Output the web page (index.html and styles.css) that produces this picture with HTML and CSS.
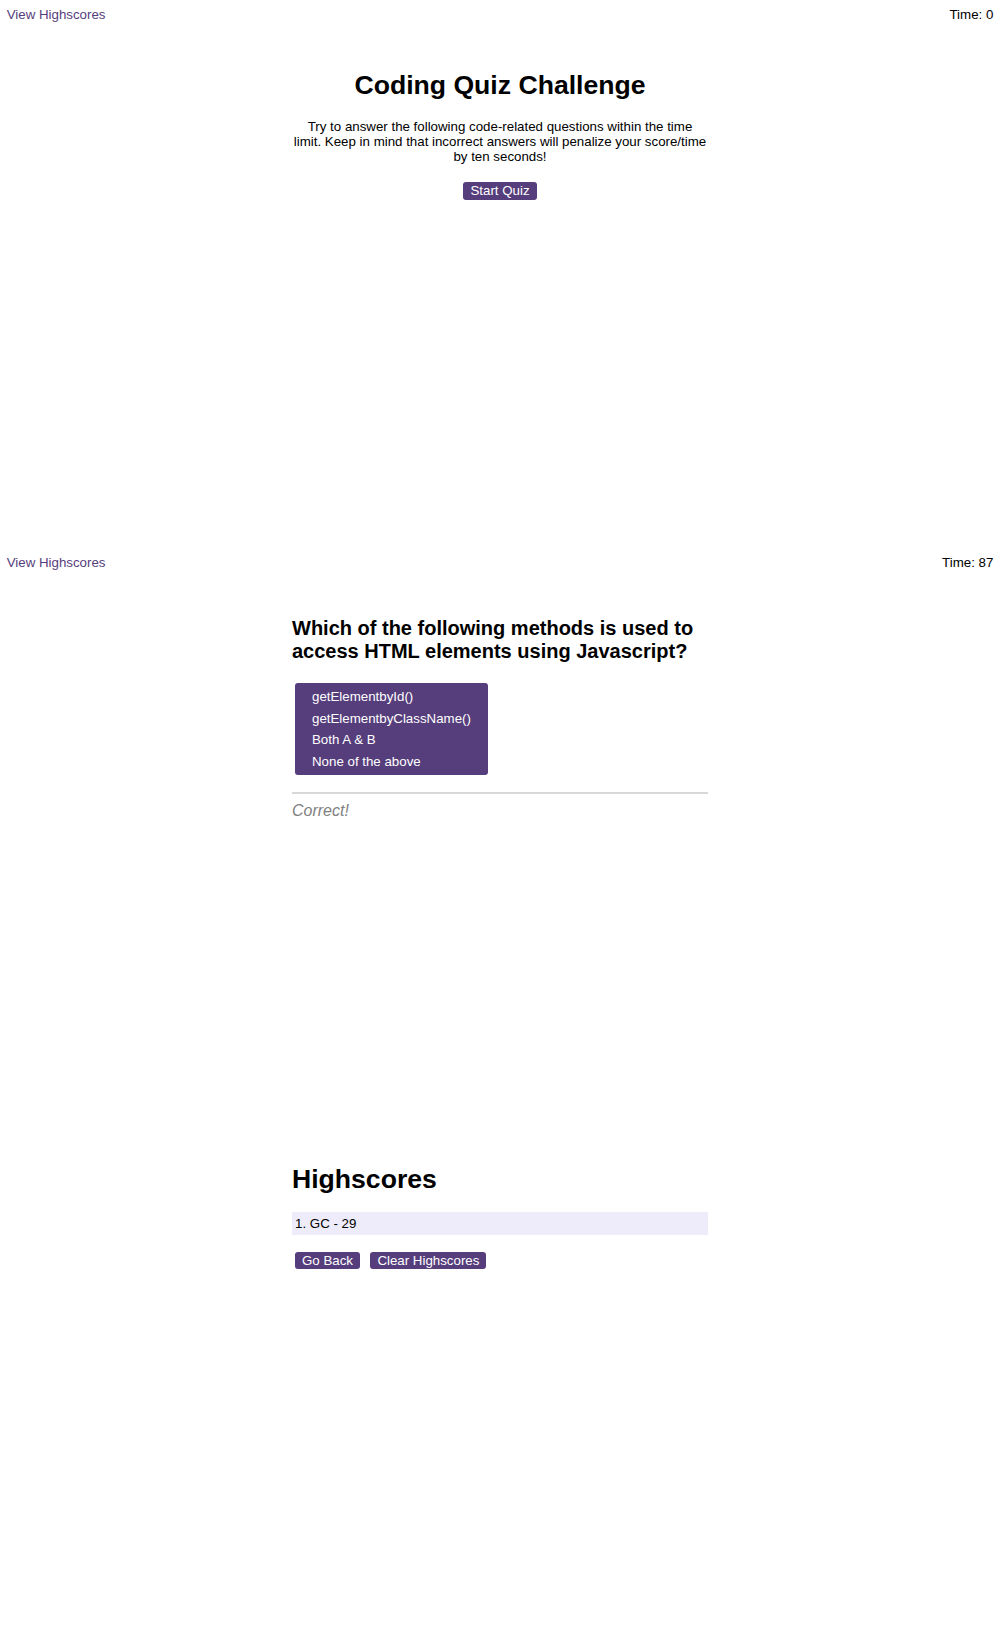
FILE: index.html
```html
<!DOCTYPE html>
<html lang="en">
<head>
<meta charset="utf-8">
<title>Coding Quiz Challenge</title>
<link rel="stylesheet" href="styles.css">
</head>
<body>
  <section class="screen">
    <header class="topbar">
      <a class="hs-link" href="#">View Highscores</a>
      <span class="timer">Time: 0</span>
    </header>
    <main class="panel panel-center">
      <h1 class="title">Coding Quiz Challenge</h1>
      <p class="intro">Try to answer the following code-related questions within the time limit. Keep in mind that incorrect answers will penalize your score/time by ten seconds!</p>
      <button class="btn" type="button">Start Quiz</button>
    </main>
  </section>

  <section class="screen">
    <header class="topbar">
      <a class="hs-link" href="#">View Highscores</a>
      <span class="timer">Time: 87</span>
    </header>
    <main class="panel">
      <h2 class="question">Which of the following methods is used to access HTML elements using Javascript?</h2>
      <ul class="choices">
        <li>getElementbyId()</li>
        <li>getElementbyClassName()</li>
        <li>Both A &amp; B</li>
        <li>None of the above</li>
      </ul>
      <hr class="divider">
      <p class="feedback">Correct!</p>
    </main>
  </section>

  <section class="screen screen-scores">
    <main class="panel">
      <h1 class="scores-title">Highscores</h1>
      <ol class="scores">
        <li>1. GC - 29</li>
      </ol>
      <div class="actions">
        <button class="btn" type="button">Go Back</button>
        <button class="btn" type="button">Clear Highscores</button>
      </div>
    </main>
  </section>
</body>
</html>
```

FILE: styles.css
```css
* {
  box-sizing: border-box;
}

html, body {
  background: #ffffff;
}

body {
  margin: 0;
  padding: 6.7px 6.7px 0;
  font-family: "Liberation Sans", Arial, Helvetica, sans-serif;
  font-size: 13.3px;
  line-height: 15.3px;
  color: #000000;
}

.screen {
  height: 547.9px;
}

.topbar {
  display: flex;
  justify-content: space-between;
  align-items: flex-start;
  height: 15.3px;
}

.hs-link {
  color: #563d7c;
  text-decoration: none;
}

.timer {
  color: #000000;
}

.panel {
  width: 416px;
  margin: 0 auto;
}

.panel-center {
  text-align: center;
}

.title {
  margin: 47.9px 0 18.4px;
  font-size: 26.6px;
  line-height: 30.6px;
  font-weight: bold;
}

.intro {
  margin: 0 0 17.5px;
  padding: 0 1px;
}

.btn {
  display: inline-block;
  margin: 0;
  padding: 1px 7px 1px;
  border: 0;
  border-radius: 3px;
  background: #563d7c;
  color: #ffffff;
  font-family: "Liberation Sans", Arial, Helvetica, sans-serif;
  font-size: 13.3px;
  line-height: 15.3px;
  cursor: pointer;
}

.question {
  margin: 46.8px 0 20px;
  font-size: 20px;
  line-height: 23px;
  font-weight: bold;
}

.choices {
  width: fit-content;
  margin: 0 0 0 3px;
  padding: 3.4px 17.5px 3.4px 17px;
  list-style: none;
  background: #563d7c;
  border-radius: 3px;
  color: #ffffff;
}

.choices li {
  padding: 3.1px 0;
}

.divider {
  height: 2px;
  margin: 16.7px 0 7.6px;
  border: 0;
  background: #d8d8d8;
}

.feedback {
  margin: 0;
  font-size: 16px;
  line-height: 18.4px;
  font-style: italic;
  color: #808080;
}

.screen-scores .panel {
  padding-top: 62px;
}

.scores-title {
  margin: 0 0 17px;
  font-size: 26.6px;
  line-height: 30.6px;
  font-weight: bold;
}

.scores {
  margin: 0;
  padding: 0;
  list-style: none;
}

.scores li {
  padding: 3.8px 3px;
  background: #eeecfa;
}

.actions {
  display: flex;
  gap: 10.4px;
  margin-top: 16.7px;
  padding-left: 3px;
}
```
